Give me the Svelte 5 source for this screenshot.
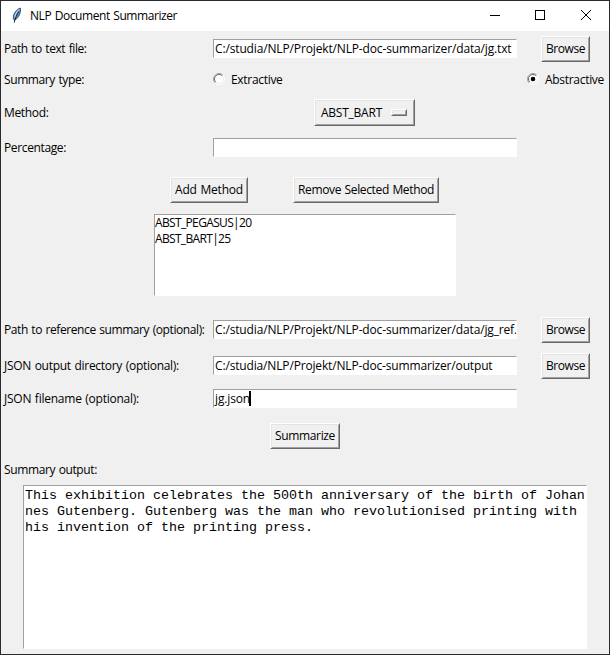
<script>
  const textPath = 'C:/studia/NLP/Projekt/NLP-doc-summarizer/data/jg.txt';
  const refPath = 'C:/studia/NLP/Projekt/NLP-doc-summarizer/data/jg_ref.';
  const outPath = 'C:/studia/NLP/Projekt/NLP-doc-summarizer/output';
  let kind = $state('abstractive');
  const methods = [
    { name: 'ABST_PEGASUS|20', width: 96.5 },
    { name: 'ABST_BART|25', width: 75.5 },
  ];
  const output = [
    'This exhibition celebrates the 500th anniversary of the birth of Johan',
    'nes Gutenberg. Gutenberg was the man who revolutionised printing with',
    'his invention of the printing press.',
  ];

  // Tracks the text so that it takes up the given width in pixels.
  function fit(node, width) {
    const natural = node.getBoundingClientRect().width;
    node.style.letterSpacing = (width - natural) / node.textContent.length + 'px';
  }
</script>

{#snippet label(text, width)}
  <div class="label"><span use:fit={width}>{text}</span></div>
{/snippet}

{#snippet button(text, width, cls)}
  <button class={['raised', cls]}><span use:fit={width}>{text}</span></button>
{/snippet}

{#snippet radio(value, text, width)}
  <button class="radio" onclick={() => (kind = value)}>
    <svg width="12" height="12" viewBox="0 0 12 12">
      <circle cx="6" cy="6" r="5.3" fill="#fff" />
      <path d="M2.1 9.9A5.5 5.5 0 0 1 9.9 2.1" fill="none" stroke="#a0a0a0" />
      <path d="M2.8 9.2A4.5 4.5 0 0 1 9.2 2.8" fill="none" stroke="#696969" />
      <path d="M9.2 2.8A4.5 4.5 0 0 1 2.8 9.2" fill="none" stroke="#e3e3e3" stroke-width=".8" />
      <path d="M9.9 2.1A5.5 5.5 0 0 1 2.1 9.9" fill="none" stroke="#fff" />
      {#if kind === value}<circle cx="6" cy="6" r="2.3" fill="#000" />{/if}
    </svg>
    <span use:fit={width}>{text}</span>
  </button>
{/snippet}

<div class="window">
  <header>
    <svg class="feather" width="12" height="17" viewBox="0 0 12 17">
      <path d="M9.4 1C6.6 1.8 3.4 5 2.6 8.3L2.3 11.5 3.3 13.2 6 11.4C8.4 9 10 5 9.4 1Z" fill="#5b97d2" stroke="#2a3440" stroke-width=".8" />
      <path d="M8.4 2.4C5.8 4.4 4.2 7.2 3.8 10.6" fill="none" stroke="#b5d8f5" stroke-width="1.1" />
      <path d="M7.8 4.5C6 7.5 4.2 11 3.2 15.6" fill="none" stroke="#111" stroke-width=".9" />
    </svg>
    <span class="title"><span use:fit={147}>NLP Document Summarizer</span></span>
    <svg class="controls" width="106" height="12" viewBox="0 0 106 12" fill="none" stroke="#000" shape-rendering="crispEdges">
      <path d="M0 5.5H10" />
      <rect x="45.5" y=".5" width="9" height="9" />
      <path d="M91 0L101 10M101 0L91 10" shape-rendering="auto" />
    </svg>
  </header>

  <main>
    <div class="row">
      {@render label('Path to text file:', 82.5)}
      <div class="entry"><span use:fit={296.5}>{textPath}</span></div>
      {@render button('Browse', 39, 'browse')}
    </div>
    <div class="row">
      {@render label('Summary type:', 80)}
      <div class="choices">
        {@render radio('extractive', 'Extractive', 51.5)}
        {@render radio('abstractive', 'Abstractive', 59)}
      </div>
    </div>
    <div class="row method">
      {@render label('Method:', 44.5)}
      <button class="raised menu"><span use:fit={61}>ABST_BART</span><i></i></button>
    </div>
    <div class="row">
      {@render label('Percentage:', 62)}
      <div class="entry"></div>
    </div>
    <div class="row actions">
      {@render button('Add Method', 68, 'add')}
      {@render button('Remove Selected Method', 136, 'remove')}
    </div>
    <div class="list">
      {#each methods as m}
        <div><span use:fit={m.width}>{m.name}</span></div>
      {/each}
    </div>
    <div class="row">
      {@render label('Path to reference summary (optional):', 200.5)}
      <div class="entry"><span use:fit={302}>{refPath}</span></div>
      {@render button('Browse', 39, 'browse')}
    </div>
    <div class="row">
      {@render label('JSON output directory (optional):', 175)}
      <div class="entry"><span use:fit={277.5}>{outPath}</span></div>
      {@render button('Browse', 39, 'browse')}
    </div>
    <div class="row">
      {@render label('JSON filename (optional):', 135)}
      <div class="entry"><span use:fit={35}>jg.json</span><b class="caret"></b></div>
    </div>
    <div class="row center">
      {@render button('Summarize', 60, 'summarize')}
    </div>
    <div class="row">
      {@render label('Summary output:', 93)}
    </div>
    <div class="output">
      {#each output as line}<div>{line}</div>{/each}
    </div>
  </main>
</div>

<style>
  .window {
    box-sizing: border-box;
    width: 610px;
    height: 655px;
    border: 1px solid #2a292d;
    background: #f0f0f0;
    color: #000;
    font: 12px/16px 'Open Sans', 'Noto Sans', sans-serif;
    overflow: hidden;
  }
  span {
    white-space: pre;
    word-spacing: 0.8px;
  }
  header {
    display: flex;
    height: 30px;
    background: #fff;
  }
  .feather {
    margin: 6px 0 0 10px;
  }
  .title {
    flex: 1;
    margin-left: 7px;
    line-height: 30px;
  }
  .controls {
    margin: 9px 13px 0 0;
  }
  main {
    display: grid;
    grid-template-rows: 31px 32px 36px 42px 37px 103px 36px 33px 37px 34px 28px 164px;
    padding-top: 5px;
  }
  .row {
    display: flex;
    align-items: flex-start;
  }
  .label {
    width: 209px;
    padding-left: 3px;
    line-height: 26px;
  }
  .method .label {
    line-height: 28px;
  }
  .entry {
    box-sizing: border-box;
    display: flex;
    width: 304px;
    height: 19px;
    margin-top: 3px;
    padding-left: 1px;
    border: 1px solid #fff;
    border-top-color: #a0a0a0;
    border-left-color: #a0a0a0;
    background: #fff;
    line-height: 18px;
    overflow: hidden;
  }
  .caret {
    width: 2px;
    height: 15px;
    margin-top: 1px;
    margin-left: -1px;
    background: #000;
  }
  button {
    box-sizing: border-box;
    margin: 0;
    padding: 0;
    border: 0;
    background: none;
    color: inherit;
    font: inherit;
  }
  .raised {
    display: flex;
    justify-content: center;
    height: 26px;
    border: 1px solid #fff;
    border-right-color: #696969;
    border-bottom-color: #696969;
    background: #f0f0f0;
    box-shadow: inset 1px 1px #e3e3e3, inset -1px -1px #a0a0a0;
    line-height: 24px;
  }
  .browse {
    width: 49px;
    margin-left: 24px;
  }
  .choices {
    display: flex;
    flex: 1;
    justify-content: space-between;
    padding-right: 5px;
  }
  .radio {
    display: flex;
    gap: 6px;
    line-height: 25px;
  }
  .radio svg {
    margin-top: 6px;
  }
  .menu {
    width: 101px;
    height: 27px;
    margin-left: 101px;
    justify-content: flex-start;
    padding-left: 6px;
    line-height: 26px;
  }
  .menu i {
    box-sizing: border-box;
    width: 16px;
    height: 7px;
    margin: 9px 0 0 9px;
    border: 1px solid #fff;
    border-right-color: #696969;
    border-bottom-color: #696969;
    box-shadow: inset 1px 1px #e3e3e3, inset -1px -1px #a0a0a0;
  }
  .actions {
    gap: 45px;
    padding-left: 169px;
  }
  .add {
    width: 78px;
  }
  .remove {
    width: 146px;
  }
  .list {
    box-sizing: border-box;
    width: 302px;
    height: 82px;
    margin-left: 153px;
    border: 1px solid #fff;
    border-top-color: #a0a0a0;
    border-left-color: #a0a0a0;
    background: #fff;
  }
  .center {
    justify-content: center;
  }
  .summarize {
    width: 70px;
  }
  .output {
    box-sizing: border-box;
    width: 564px;
    margin-left: 22px;
    padding: 2px 0 0 1px;
    border: 1px solid #fff;
    border-top-color: #a0a0a0;
    border-left-color: #a0a0a0;
    background: #fff;
    font: 13.333px/16px 'Courier New', 'Liberation Mono', monospace;
    white-space: pre;
  }
</style>
